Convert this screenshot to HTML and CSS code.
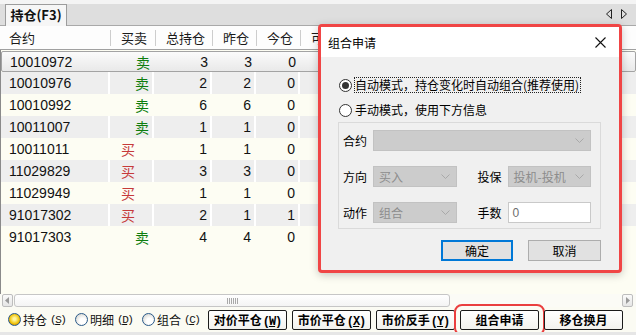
FILE: index.html
```html
<!DOCTYPE html>
<html lang="zh-CN">
<head>
<meta charset="utf-8">
<link rel="stylesheet" href="styles.css">
</head>
<body>
<div class="app">
  <div class="tabbar">
    <div class="tab">持仓(F3)</div>
    <div class="tabnav">
      <svg width="8" height="10" viewBox="0 0 8 10"><path d="M6.5 0.5 V9.5 L1.5 5 Z" fill="none" stroke="#222"/></svg>
      <svg width="8" height="10" viewBox="0 0 8 10"><path d="M1.5 0.5 V9.5 L6.5 5 Z" fill="none" stroke="#222"/></svg>
    </div>
  </div>

  <div class="thead">
    <div class="th first">合约</div>
    <div class="th">买卖</div>
    <div class="th">总持仓</div>
    <div class="th">昨仓</div>
    <div class="th">今仓</div>
    <div class="th last">可</div>
  </div>

  <div class="tbody">
    <div class="tr sel"><div class="td code">10010972</div><div class="td side sell">卖</div><div class="td num">3</div><div class="td num">3</div><div class="td num">0</div><div class="td rest"></div></div>
    <div class="tr alt"><div class="td code">10010976</div><div class="td side sell">卖</div><div class="td num">2</div><div class="td num">2</div><div class="td num">0</div><div class="td rest"></div></div>
    <div class="tr"><div class="td code">10010992</div><div class="td side sell">卖</div><div class="td num">6</div><div class="td num">6</div><div class="td num">0</div><div class="td rest"></div></div>
    <div class="tr alt"><div class="td code">10011007</div><div class="td side sell">卖</div><div class="td num">1</div><div class="td num">1</div><div class="td num">0</div><div class="td rest"></div></div>
    <div class="tr"><div class="td code">10011011</div><div class="td side buy">买</div><div class="td num">1</div><div class="td num">1</div><div class="td num">0</div><div class="td rest"></div></div>
    <div class="tr alt"><div class="td code">11029829</div><div class="td side buy">买</div><div class="td num">3</div><div class="td num">3</div><div class="td num">0</div><div class="td rest"></div></div>
    <div class="tr"><div class="td code">11029949</div><div class="td side buy">买</div><div class="td num">1</div><div class="td num">1</div><div class="td num">0</div><div class="td rest"></div></div>
    <div class="tr alt"><div class="td code">91017302</div><div class="td side buy">买</div><div class="td num">2</div><div class="td num">1</div><div class="td num">1</div><div class="td rest"></div></div>
    <div class="tr"><div class="td code">91017303</div><div class="td side sell">卖</div><div class="td num">4</div><div class="td num">4</div><div class="td num">0</div><div class="td rest"></div></div>
  </div>

  <div class="hscroll">
    <div class="sbtn"><svg width="5" height="7" viewBox="0 0 5 7"><path d="M4 0 V7 L0 3.5 Z" fill="#9a9a9a"/></svg></div>
    <div class="thumb"><span class="grip"></span></div>
    <div class="track"></div>
    <div class="sbtn"><svg width="5" height="7" viewBox="0 0 5 7"><path d="M1 0 V7 L5 3.5 Z" fill="#9a9a9a"/></svg></div>
  </div>

  <div class="footer">
    <div class="radios">
      <label class="xpradio"><span class="xpdot on"></span>持仓<span class="key">(<u>S</u>)</span></label>
      <label class="xpradio"><span class="xpdot"></span>明细<span class="key">(<u>D</u>)</span></label>
      <label class="xpradio"><span class="xpdot"></span>组合<span class="key">(<u>C</u>)</span></label>
    </div>
    <div class="fbtns">
      <button class="fbtn">对价平仓<span class="bkey">(<u>W</u>)</span></button>
      <button class="fbtn">市价平仓<span class="bkey">(<u>X</u>)</span></button>
      <button class="fbtn">市价反手<span class="bkey">(<u>Y</u>)</span></button>
      <button class="fbtn hl">组合申请</button>
      <button class="fbtn">移仓换月</button>
    </div>
  </div>
  <div class="bottomstrip"></div>

  <div class="dialog">
    <div class="dtitle">
      <span>组合申请</span>
      <svg width="11" height="11" viewBox="0 0 11 11"><path d="M0.5 0.5 L10.5 10.5 M10.5 0.5 L0.5 10.5" stroke="#111" stroke-width="1.1"/></svg>
    </div>
    <div class="dbody">
      <div class="dradio first"><span class="rd on"></span><span class="focus">自动模式，持仓变化时自动组合(推荐使用)</span></div>
      <div class="dradio"><span class="rd"></span><span class="plain">手动模式，使用下方信息</span></div>
      <div class="group">
        <div class="grow">
          <span class="lbl">合约</span>
          <div class="combo wide"><span></span><svg width="9" height="5" viewBox="0 0 9 5"><path d="M0.5 0.5 L4.5 4.5 L8.5 0.5" fill="none" stroke="#a9a9a9"/></svg></div>
        </div>
        <div class="grow">
          <span class="lbl">方向</span>
          <div class="combo"><span>买入</span><svg width="9" height="5" viewBox="0 0 9 5"><path d="M0.5 0.5 L4.5 4.5 L8.5 0.5" fill="none" stroke="#a9a9a9"/></svg></div>
          <span class="lbl lbl2">投保</span>
          <div class="combo"><span>投机-投机</span><svg width="9" height="5" viewBox="0 0 9 5"><path d="M0.5 0.5 L4.5 4.5 L8.5 0.5" fill="none" stroke="#a9a9a9"/></svg></div>
        </div>
        <div class="grow">
          <span class="lbl">动作</span>
          <div class="combo"><span>组合</span><svg width="9" height="5" viewBox="0 0 9 5"><path d="M0.5 0.5 L4.5 4.5 L8.5 0.5" fill="none" stroke="#a9a9a9"/></svg></div>
          <span class="lbl lbl2">手数</span>
          <div class="input">0</div>
        </div>
      </div>
      <div class="dbtns">
        <button class="dbtn ok">确定</button>
        <button class="dbtn">取消</button>
      </div>
    </div>
  </div>
</div>
</body>
</html>
```

FILE: styles.css
```css
* { box-sizing: border-box; }
html, body { margin: 0; padding: 0; }
body {
  font-family: "Noto Sans CJK SC", "Noto Sans", sans-serif;
  color: #111;
}
.app {
  position: relative;
  width: 636px;
  height: 335px;
  overflow: hidden;
  background: #fdfdf4;
  display: flex;
  flex-direction: column;
}

/* tab bar */
.tabbar {
  height: 26px;
  flex: none;
  display: flex;
  align-items: flex-end;
  padding-left: 5px;
  background: linear-gradient(#f4f4f4 0 4px, #dedede 4px);
  border-bottom: 1px solid #a9a9a9;
}
.tab {
  width: 62px;
  height: 22px;
  border: 1px solid #9c9c9c;
  border-bottom: none;
  background: #f6f6f6;
  font-weight: bold;
  font-size: 13px;
  line-height: 19px;
  text-align: center;
  margin-bottom: -1px;
}
.tabnav {
  margin-left: auto;
  align-self: center;
  display: flex;
  gap: 7px;
  padding-right: 8px;
  padding-top: 3px;
}

/* header */
.thead {
  height: 24px;
  flex: none;
  display: grid;
  grid-template-columns: 111px 45px 57px 44px 44px 1fr;
  background: #fdfdfd;
  border-bottom: 1px solid #a0a0a0;
  padding: 4px 0 3px;
}
.th {
  font-size: 13px;
  line-height: 16px;
  padding-left: 10px;
  border-right: 1px solid #cdcdcd;
  color: #1a1a1a;
  white-space: nowrap;
}
.th.first { padding-left: 9px; }
.th.last { border-right: none; }

/* body */
.tbody {
  flex: 1;
  background: #fdfdf3;
  border-left: 1px solid #8a8a8a;
  display: flex;
  flex-direction: column;
}
.tr {
  height: 22px;
  flex: none;
  display: grid;
  grid-template-columns: 109px 44px 58px 44px 44px 1fr;
  align-items: stretch;
}
.tr.alt { background: #eeeeee; }
.tr.alt .td { border-right: 2px solid #ffffff; }
.tr.alt .td.rest { border-right: none; }
.tr.sel {
  margin: 1px 0 0 0;
  height: 21px;
  border: 1px solid #a3a3a3;
  border-radius: 2px;
  background: linear-gradient(#fbfbfb, #e9e9e9);
}
.td {
  display: flex;
  align-items: center;
  font-size: 14px;
  font-family: "Liberation Sans", Arial, sans-serif;
  color: #121212;
  border-right: 2px solid transparent;
}
.td.code { padding-left: 8px; }
.td.side { font-family: "Noto Sans CJK SC", sans-serif; font-size: 14px; }
.td.sell { color: #0d7d0d; padding-left: 25px; }
.td.buy { color: #c63a3a; padding-left: 11px; }
.td.num { justify-content: flex-end; padding-right: 3px; }

/* horizontal scrollbar */
.hscroll {
  height: 13px;
  flex: none;
  display: flex;
  align-items: stretch;
  padding: 0 3px 0 2px;
  background: #fafaf5;
}
.sbtn {
  width: 11px;
  border: 1px solid #bdbdbd;
  border-radius: 2px;
  background: linear-gradient(#fafafa, #e6e6e6);
  display: flex;
  align-items: center;
  justify-content: center;
}
.thumb {
  width: 436px;
  margin-left: 1px;
  border: 1px solid #c6c6c6;
  border-radius: 3px;
  background: linear-gradient(#ffffff, #f4f4f4);
  display: flex;
  align-items: center;
  justify-content: center;
}
.grip {
  width: 11px;
  height: 6px;
  background: repeating-linear-gradient(90deg, #a8a8a8 0 1px, transparent 1px 2px);
}
.track { flex: 1; background: #fbfbf6; }

/* footer */
.footer {
  height: 25px;
  flex: none;
  display: flex;
  align-items: center;
  padding-left: 8px;
  background: #fbfbf3;
}
.radios { display: flex; gap: 11px; }
.xpradio {
  width: 56px;
  display: flex;
  align-items: center;
  gap: 2px;
  font-size: 12px;
  color: #111;
  white-space: nowrap;
}
.key {
  font-family: "Liberation Mono", monospace;
  font-size: 11px;
  letter-spacing: -1.5px;
  margin-left: 1px;
}
.xpradio u { text-decoration-thickness: 1px; text-underline-offset: 1px; }
.xpdot {
  width: 13px;
  height: 13px;
  flex: none;
  border-radius: 50%;
  border: 1px solid #2a5a8a;
  background: radial-gradient(circle at 60% 65%, #ffffff 0 30%, #dcdcd8 75%);
}
.xpdot.on {
  background: radial-gradient(circle at 50% 45%, #fff6a0 0 15%, #f2c814 55%, #d49a00 75%, #f6f2e0 80%);
}
.fbtns { display: flex; gap: 5px; margin-left: 10px; }
.fbtn {
  width: 79px;
  height: 20px;
  padding: 0;
  border: 1px solid #1b1b1b;
  border-radius: 2px;
  background: linear-gradient(#ffffff, #f2f2ee);
  font-family: "Noto Sans CJK SC", sans-serif;
  font-weight: bold;
  font-size: 12px;
  line-height: 18px;
  color: #000;
  white-space: nowrap;
}
.bkey {
  font-family: "Liberation Mono", monospace;
  font-size: 12px;
  letter-spacing: -1px;
  margin-left: 1px;
}
.fbtn.hl {
  outline: 2px solid #ea3f3f;
  outline-offset: 4px;
  border-radius: 2px;
}
.bottomstrip {
  height: 3px;
  flex: none;
  background: #e6e6e6;
}

/* dialog */
.dialog {
  position: absolute;
  left: 318px;
  top: 24px;
  width: 304px;
  height: 249px;
  border: 3px solid #f04545;
  border-radius: 4px;
  background: #f0f0f0;
  box-shadow: 0 2px 8px rgba(0, 0, 0, 0.22);
  display: flex;
  flex-direction: column;
}
.dtitle {
  height: 30px;
  flex: none;
  background: #ffffff;
  display: flex;
  align-items: center;
  justify-content: space-between;
  padding: 0 13px 0 7px;
  font-size: 12px;
  color: #000;
}
.dbody {
  flex: 1;
  padding: 20px 18px 0 17px;
  font-size: 12px;
  color: #000;
}
.dradio {
  height: 16px;
  display: flex;
  align-items: center;
  gap: 2px;
  padding-left: 1px;
  margin-top: 9px;
  white-space: nowrap;
}
.dradio.first { margin-top: 0; }
.rd {
  width: 13px;
  height: 13px;
  border-radius: 50%;
  border: 1px solid #333;
  background: #fff;
  display: flex;
  align-items: center;
  justify-content: center;
  flex: none;
}
.rd.on::after {
  content: "";
  width: 7px;
  height: 7px;
  border-radius: 50%;
  background: #333;
}
.focus {
  border: 1px dotted #222;
  line-height: 14px;
  padding: 0 1px 0 0;
}
.plain { line-height: 14px; padding-left: 1px; }

.group {
  margin-top: 4px;
  height: 107px;
  border: 1px solid #dadada;
  padding: 7px 9px 5px 4px;
  display: flex;
  flex-direction: column;
  gap: 15px;
}
.grow {
  height: 21px;
  display: flex;
  align-items: center;
}
.lbl { width: 30px; flex: none; }
.lbl2 { margin-left: 21px; }
.combo {
  width: 84px;
  height: 21px;
  background: #cccccc;
  border: 1px solid #c2c2c2;
  display: flex;
  align-items: center;
  justify-content: space-between;
  padding: 0 6px 0 5px;
  color: #8d8d8d;
  font-size: 12px;
  white-space: nowrap;
}
.combo.wide { width: 218px; }
.input {
  width: 84px;
  height: 21px;
  background: #fff;
  border: 1px solid #c9c9c9;
  display: flex;
  align-items: center;
  padding-left: 4px;
  font-family: "Liberation Sans", Arial, sans-serif;
  color: #6d6d6d;
  font-size: 12px;
}
.dbtns {
  margin-top: 11px;
  display: flex;
  justify-content: flex-end;
  gap: 15px;
}
.dbtn {
  width: 73px;
  height: 21px;
  padding: 0;
  background: #e1e1e1;
  border: 1px solid #adadad;
  font-family: "Noto Sans CJK SC", sans-serif;
  font-size: 12px;
  color: #000;
}
.dbtn.ok {
  width: 72px;
  border: 2px solid #0078d7;
}
```
